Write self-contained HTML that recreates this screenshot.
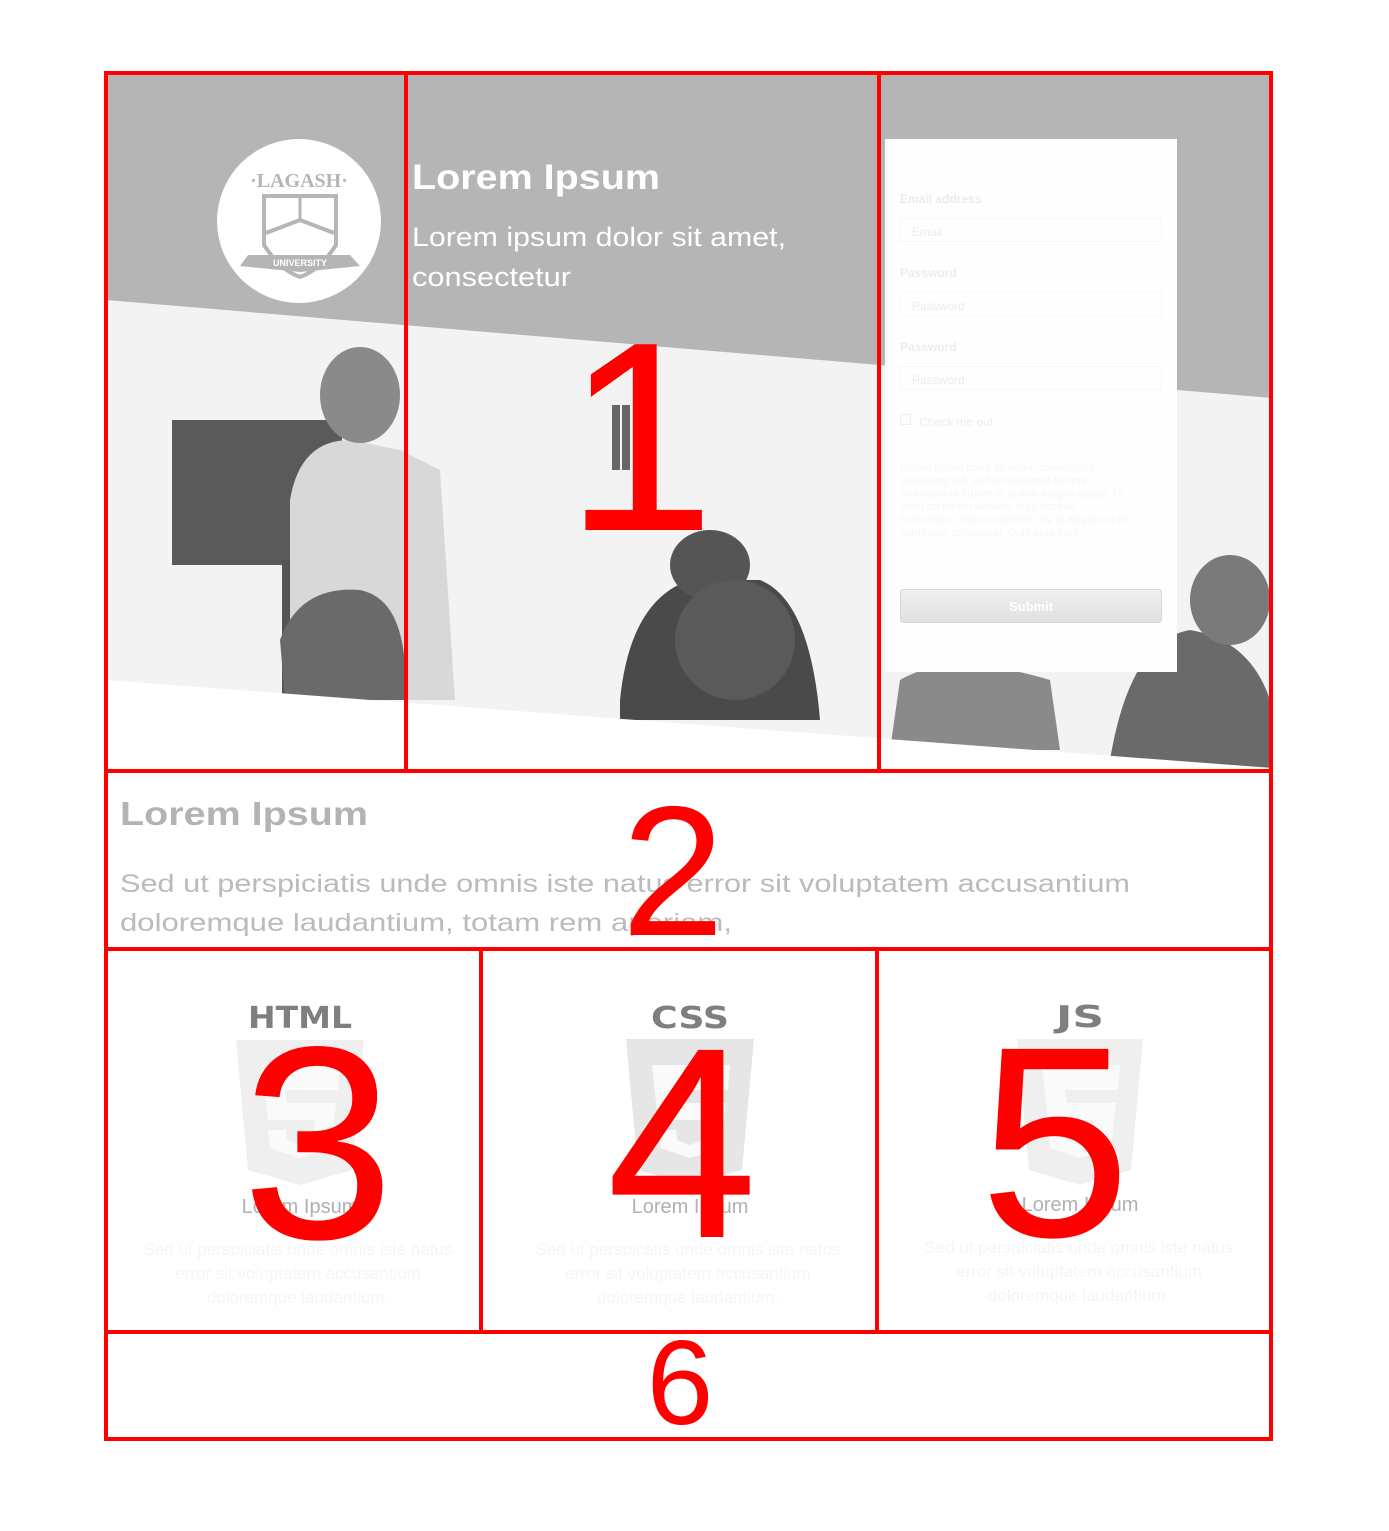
<!DOCTYPE html>
<html><head><meta charset="utf-8"><style>
html,body{margin:0;padding:0;background:#fff;width:1389px;height:1531px;overflow:hidden}
svg{display:block}
</style></head><body>
<svg width="1389" height="1531" viewBox="0 0 1389 1531" xmlns="http://www.w3.org/2000/svg" font-family="Liberation Sans, DejaVu Sans, sans-serif">
<rect x="106" y="74" width="1166" height="696" fill="#f3f3f3"/>
<rect x="172" y="420" width="170" height="145" fill="#5a5a5a"/>
<rect x="282" y="560" width="14" height="135" fill="#555"/>
<path d="M290 500 Q300 440 350 440 L400 450 L440 470 L455 700 L290 700 Z" fill="#d8d8d8"/>
<ellipse cx="360" cy="395" rx="40" ry="48" fill="#8a8a8a"/>
<path d="M280 640 Q300 585 360 590 Q410 600 405 700 L285 700 Z" fill="#6a6a6a"/>
<rect x="612" y="405" width="8" height="65" fill="#666"/>
<rect x="622" y="405" width="8" height="65" fill="#666"/>
<path d="M620 700 Q630 600 690 580 L760 580 Q810 600 820 720 L620 720 Z" fill="#4a4a4a"/>
<ellipse cx="710" cy="565" rx="40" ry="35" fill="#555"/>
<ellipse cx="735" cy="640" rx="60" ry="60" fill="#5a5a5a"/>
<path d="M900 680 Q950 650 1050 680 L1060 750 L890 750 Z" fill="#8a8a8a"/>
<path d="M1110 760 Q1130 640 1190 630 Q1250 640 1270 700 L1270 768 Z" fill="#6a6a6a"/>
<ellipse cx="1230" cy="600" rx="40" ry="45" fill="#7a7a7a"/>
<polygon points="106,74 1272,74 1272,398 106,300" fill="#b5b5b5"/>
<polygon points="106,680 1272,768 1272,770 106,770" fill="#fff"/>
<circle cx="299" cy="221" r="82" fill="#fff"/>
<text x="299" y="187" font-family="Liberation Serif, serif" font-weight="bold" font-size="20" fill="#b5b5b5" text-anchor="middle">·LAGASH·</text>
<path d="M264 196 L336 196 L336 245 Q320 270 300 277 Q280 270 264 245 Z" fill="none" stroke="#b5b5b5" stroke-width="4"/>
<path d="M266 233 L300 220 L334 233" fill="none" stroke="#b5b5b5" stroke-width="4"/>
<line x1="300" y1="198" x2="300" y2="220" stroke="#b5b5b5" stroke-width="3"/>
<path d="M248 255 L350 255 L360 266 L300 272 L240 266 Z" fill="#b5b5b5"/>
<text x="300" y="266" font-weight="bold" font-size="9" fill="#fff" text-anchor="middle">UNIVERSITY</text>
<text x="412" y="189" font-weight="bold" font-size="35" fill="#fff" textLength="248" lengthAdjust="spacingAndGlyphs">Lorem Ipsum</text>
<text x="412" y="246" font-size="27" fill="#fff" textLength="374" lengthAdjust="spacingAndGlyphs">Lorem ipsum dolor sit amet,</text>
<text x="412" y="286" font-size="27" fill="#fff" textLength="159" lengthAdjust="spacingAndGlyphs">consectetur</text>
<rect x="885" y="139" width="292" height="533" fill="#fefefe"/>
<g font-size="12" fill="#ececec">
<text x="900" y="203" font-weight="bold">Email address</text>
<rect x="900.5" y="218.5" width="261" height="23" fill="none" stroke="#f6f6f6"/>
<text x="912" y="236">Email</text>
<text x="900" y="277" font-weight="bold">Password</text>
<rect x="900.5" y="292.5" width="261" height="23" fill="none" stroke="#f6f6f6"/>
<text x="912" y="310">Password</text>
<text x="900" y="351" font-weight="bold">Password</text>
<rect x="900.5" y="366.5" width="261" height="23" fill="none" stroke="#f6f6f6"/>
<text x="912" y="384">Password</text>
<rect x="900.5" y="414.5" width="10" height="10" fill="none" stroke="#eee"/>
<text x="919" y="426">Check me out</text>
<g fill="#f6f6f6" font-size="11">
<text x="900" y="471">Lorem ipsum dolor sit amet, consectetur</text>
<text x="900" y="484">adipiscing elit, sed do eiusmod tempor</text>
<text x="900" y="497">incididunt ut labore et dolore magna aliqua. Ut</text>
<text x="900" y="510">enim ad minim veniam, quis nostrud</text>
<text x="900" y="523">exercitation ullamco laboris nisi ut aliquip ex ea</text>
<text x="900" y="536">commodo consequat. Duis aute irure</text>
</g>
</g>
<defs><linearGradient id="bt" x1="0" y1="0" x2="0" y2="1"><stop offset="0" stop-color="#f0f0f0"/><stop offset="1" stop-color="#e0e0e0"/></linearGradient></defs>
<rect x="900.5" y="589.5" width="261" height="33" rx="3" fill="url(#bt)" stroke="#d8d8d8"/>
<text x="1031" y="611" font-size="13" font-weight="bold" fill="#fff" text-anchor="middle">Submit</text>
<text x="120" y="825" font-weight="bold" font-size="33" fill="#b3b3b3" textLength="248" lengthAdjust="spacingAndGlyphs">Lorem Ipsum</text>
<text x="120" y="892" font-size="25" fill="#bbb" textLength="1010" lengthAdjust="spacingAndGlyphs">Sed ut perspiciatis unde omnis iste natus error sit voluptatem accusantium</text>
<text x="120" y="931" font-size="25" fill="#bbb" textLength="612" lengthAdjust="spacingAndGlyphs">doloremque laudantium, totam rem aperiam,</text>
<g>
<text x="300" y="1028" font-family="DejaVu Sans, sans-serif" font-weight="bold" font-size="30" fill="#7f7f7f" text-anchor="middle" textLength="104" lengthAdjust="spacingAndGlyphs">HTML</text>
<polygon points="236,1040 364,1040 352,1170 300,1185 248,1170" fill="#efefef"/>
<polygon points="262,1065 340,1065 338,1090 285,1090 287,1103 336,1103 331,1148 300,1158 270,1148 268,1130 286,1130 287,1140 300,1145 313,1140 315,1120 268,1120" fill="#fafafa"/>
<text x="300" y="1213" font-size="20" fill="#b0b0b0" text-anchor="middle">Lorem Ipsum</text>
<g font-size="17" fill="#f5f5f5" text-anchor="middle"><text x="298" y="1255">Sed ut perspiciatis unde omnis iste natus</text><text x="298" y="1279">error sit voluptatem accusantium</text><text x="298" y="1303">doloremque laudantium.</text></g>
</g>
<g>
<text x="690" y="1028" font-family="DejaVu Sans, sans-serif" font-weight="bold" font-size="30" fill="#7f7f7f" text-anchor="middle" textLength="78" lengthAdjust="spacingAndGlyphs">CSS</text>
<polygon points="626,1039 754,1039 742,1170 690,1185 638,1170" fill="#e6e6e6"/>
<polygon points="652,1065 730,1065 728,1090 675,1090 677,1103 726,1103 721,1148 690,1158 660,1148 658,1130 676,1130 677,1140 690,1145 703,1140 705,1120 658,1120" fill="#fafafa"/>
<text x="690" y="1213" font-size="20" fill="#b0b0b0" text-anchor="middle">Lorem Ipsum</text>
<g font-size="17" fill="#f5f5f5" text-anchor="middle"><text x="688" y="1255">Sed ut perspicatis unde omnis iste natus</text><text x="688" y="1279">error sit voluptatem accusantium</text><text x="688" y="1303">doloremque laudantium.</text></g>
</g>
<g>
<text x="1080" y="1027" font-family="DejaVu Sans, sans-serif" font-weight="bold" font-size="30" fill="#7f7f7f" text-anchor="middle" textLength="48" lengthAdjust="spacingAndGlyphs">JS</text>
<polygon points="1017,1039 1143,1039 1131,1170 1080,1185 1029,1170" fill="#efefef"/>
<polygon points="1042,1065 1120,1065 1118,1090 1065,1090 1067,1103 1116,1103 1111,1148 1080,1158 1050,1148 1048,1130 1066,1130 1067,1140 1080,1145 1093,1140 1095,1120 1048,1120" fill="#fafafa"/>
<text x="1080" y="1211" font-size="20" fill="#b0b0b0" text-anchor="middle">Lorem Ipsum</text>
<g font-size="17" fill="#f5f5f5" text-anchor="middle"><text x="1079" y="1253">Sed ut perspiciatis unde omnis iste natus</text><text x="1079" y="1277">error sit voluptatem accusantium</text><text x="1079" y="1301">doloremque laudantium.</text></g>
</g>
<g fill="none" stroke="#ff0000" stroke-width="4">
<rect x="106" y="73" width="1165" height="1366"/>
<line x1="106" y1="771" x2="1271" y2="771"/>
<line x1="106" y1="949" x2="1271" y2="949"/>
<line x1="106" y1="1332" x2="1271" y2="1332"/>
<line x1="406" y1="73" x2="406" y2="771"/>
<line x1="879" y1="73" x2="879" y2="771"/>
<line x1="481" y1="949" x2="481" y2="1332"/>
<line x1="877" y1="949" x2="877" y2="1332"/>
</g>
<g fill="#ff0000" font-family="Liberation Sans, sans-serif" text-anchor="middle">
<text x="640" y="530" font-size="270">1</text>
<text x="673" y="935" font-size="185">2</text>
<text x="318" y="1238" font-size="275">3</text>
<text x="682" y="1237" font-size="272">4</text>
<text x="1055" y="1236" font-size="272">5</text>
<text x="680" y="1424" font-size="120">6</text>
</g>
</svg>
</body></html>
